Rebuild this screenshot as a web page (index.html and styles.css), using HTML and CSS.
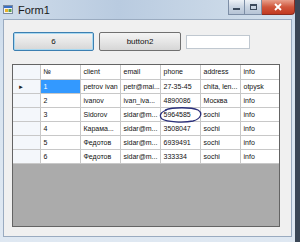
FILE: index.html
```html
<!DOCTYPE html>
<html>
<head>
    <meta charset="UTF-8">
    <title>Form1</title>
    <link rel="stylesheet" href="styles.css">
</head>
<body>
<div class="window">
    <!-- Title bar -->
    <div class="titlebar">
        <svg class="app-icon" width="11" height="11" viewBox="0 0 11 11">
            <rect x="0.5" y="1.5" width="9" height="8" fill="#f4f4f4" stroke="#7a8aa0"/>
            <rect x="1" y="2" width="8" height="2" fill="#3a6fc4"/>
            <rect x="2" y="5" width="3" height="3" fill="#e8b22a"/>
            <rect x="5.5" y="5" width="3" height="3" fill="#5aa04a"/>
        </svg>
        <span class="title">Form1</span>
        <div class="caption-buttons">
            <div class="cap-btn">
                <svg width="9" height="8" viewBox="0 0 9 8"><rect x="1" y="5" width="7" height="2" fill="#3c4a5c"/></svg>
            </div>
            <div class="cap-btn">
                <svg width="9" height="8" viewBox="0 0 9 8"><rect x="1.5" y="1.5" width="6" height="5" fill="none" stroke="#3c4a5c"/><rect x="1" y="1" width="7" height="2" fill="#3c4a5c"/></svg>
            </div>
            <div class="cap-btn close">
                <svg width="10" height="8" viewBox="0 0 10 8"><path d="M2 1 L8 7 M8 1 L2 7" stroke="#fff" stroke-width="1.8"/></svg>
            </div>
        </div>
    </div>

    <!-- Client area -->
    <div class="client">
        <div class="controls">
            <button class="btn default">6</button>
            <button class="btn">button2</button>
            <input type="text" class="textbox">
        </div>

        <div class="grid">
            <table class="data">
                <thead>
                    <tr>
                        <th class="rowhead"></th>
                        <th>№</th>
                        <th>client</th>
                        <th>email</th>
                        <th>phone</th>
                        <th>address</th>
                        <th>info</th>
                    </tr>
                </thead>
                <tbody>
                    <tr>
                        <td class="rowhead"><span class="arrow">&#9658;</span></td>
                        <td class="selected">1</td>
                        <td>petrov ivan</td>
                        <td>petr@mai...</td>
                        <td>27-35-45</td>
                        <td>chita, len...</td>
                        <td>otpysk</td>
                    </tr>
                    <tr>
                        <td class="rowhead"></td>
                        <td>2</td>
                        <td>ivanov</td>
                        <td>ivan_iva...</td>
                        <td>4890086</td>
                        <td>Москва</td>
                        <td>info</td>
                    </tr>
                    <tr>
                        <td class="rowhead"></td>
                        <td>3</td>
                        <td>Sidorov</td>
                        <td>sidar@m...</td>
                        <td class="circled">5964585
                            <svg class="ring" width="44" height="16" viewBox="0 0 44 16">
                                <path d="M6 3 C14 0 32 0 39 3 C44 6 42 12 34 14 C24 16 8 15 3 12 C0 9 1 5 8 3" fill="none" stroke="#2a2f7a" stroke-width="1.3"/>
                            </svg>
                        </td>
                        <td>sochi</td>
                        <td>info</td>
                    </tr>
                    <tr>
                        <td class="rowhead"></td>
                        <td>4</td>
                        <td>Карама...</td>
                        <td>sidar@m...</td>
                        <td>3508047</td>
                        <td>sochi</td>
                        <td>info</td>
                    </tr>
                    <tr>
                        <td class="rowhead"></td>
                        <td>5</td>
                        <td>Федотов</td>
                        <td>sidar@m...</td>
                        <td>6939491</td>
                        <td>sochi</td>
                        <td>info</td>
                    </tr>
                    <tr>
                        <td class="rowhead"></td>
                        <td>6</td>
                        <td>Федотов</td>
                        <td>sidar@m...</td>
                        <td>333334</td>
                        <td>sochi</td>
                        <td>info</td>
                    </tr>
                </tbody>
            </table>
        </div>
    </div>
</div>
</body>
</html>
```

FILE: styles.css
```css
body {margin: 0; width: 300px; height: 242px; overflow: hidden; background: #3a4656; font-family: "Liberation Sans", Arial, sans-serif;}
.window {width: 295px; height: 242px; box-sizing: border-box; padding: 0 3px 5px 3px; background: linear-gradient(to bottom, #c9d9ea, #d8e4f0 30%, #dfe8f2); display: flex; flex-direction: column;}

/* Title bar */
.titlebar {height: 19px; display: flex; align-items: center; position: relative; background: linear-gradient(to right, #cfdcea, #b9cbe0 40%, #c7d6e6 70%, #d6e2ee);}
.app-icon {margin-left: 0; margin-right: 4px;}
.title {font-size: 11px; color: #1a1a1a; font-family: "Liberation Sans", sans-serif;}
.caption-buttons {position: absolute; right: -3px; top: 0; display: flex;}
.cap-btn {width: 17px; height: 15px; display: flex; align-items: center; justify-content: center; background: linear-gradient(to bottom, #eef2f7, #c9d4e2 50%, #b6c4d6); border: 1px solid #7d8ea6; border-top: none; box-sizing: border-box;}
.cap-btn + .cap-btn {border-left: none;}
.cap-btn.close {width: 33px; background: linear-gradient(to bottom, #e8a08c, #d0563c 50%, #c23a22); border-color: #8a2e22; border-radius: 0 0 4px 0;}

/* Client area */
.client {flex: 1; background: #f0f0f0; border: 1px solid #9aabc0; display: flex; flex-direction: column;}
.controls {display: flex; align-items: center; padding: 12px 0 0 9px; height: 19px;}
.btn {height: 19px; padding: 0; margin: 0; font-family: "Liberation Sans", sans-serif; font-size: 8px; color: #111; border: 1px solid #707070; border-radius: 2px; background: linear-gradient(to bottom, #f4f4f4, #e6e6e6 50%, #d6d6d6);}
.btn.default {width: 81px; border-color: #3c7fb1; box-shadow: inset 0 0 0 1px #a8d8f0;}
.btn + .btn {width: 82px; margin-left: 5px;}
.textbox {width: 64px; height: 14px; box-sizing: border-box; margin-left: 5px; border: 1px solid #c0c8d0; background: #fff; padding: 0;}

/* Data grid */
.grid {margin: 13px 0 0 8px; width: 268px; height: 163px; box-sizing: border-box; border: 1px solid #646464; background: #ababab; overflow: hidden;}
.data {border-collapse: collapse; table-layout: fixed; width: 267px; font-size: 7px; background: #fff;}
.data th, .data td {height: 14px; padding: 0 0 0 3px; border: 1px solid #c8c8c8; text-align: left; white-space: nowrap; overflow: hidden; font-weight: normal; color: #111; box-sizing: border-box;}
.data th {height: 14px; background: #fff; border-top: none;}
.data tr > :first-child {border-left: none;}
.data tr > :last-child {border-right: none;}
.data .rowhead {width: 27px; background: #f4f7fb; padding: 0;}
.arrow {font-size: 6px; margin-left: 5px; color: #222;}
.data td.selected {background: #3399ff; color: #fff;}
.circled {position: relative; overflow: visible !important;}
.ring {position: absolute; left: -2px; top: -1px;}
```
